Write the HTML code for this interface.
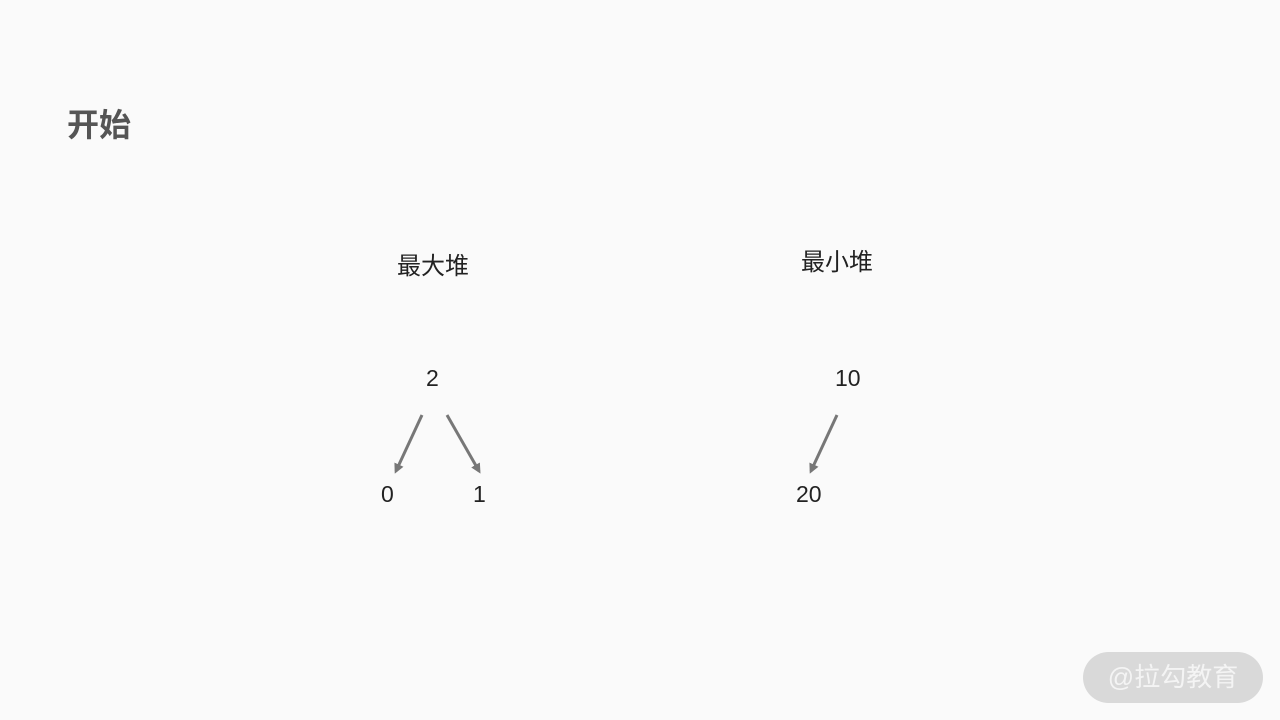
<!DOCTYPE html>
<html><head><meta charset="utf-8"><style>
html,body{margin:0;padding:0}
body{width:1280px;height:720px;background:#fafafa;position:relative;overflow:hidden;font-family:"Liberation Sans","Noto Sans CJK SC",sans-serif;color:#222}
.t{position:absolute;white-space:nowrap;line-height:1}
.badge{position:absolute;left:1083px;top:652px;width:180px;height:51px;border-radius:26px;background:#d9d9d9;color:#f4f4f4;font-size:26px;line-height:51px;text-align:center;font-family:"Liberation Sans","Noto Sans CJK SC",sans-serif}
</style></head><body>
<div class="t" style="left:67px;top:109px;font-size:32px;font-weight:bold;color:#555">开始</div>
<div class="t" style="left:397px;top:255px;font-size:24px">最大堆</div>
<div class="t" style="left:801px;top:251px;font-size:24px">最小堆</div>
<div class="t" style="left:426px;top:367px;font-size:23px">2</div>
<div class="t" style="left:835px;top:367px;font-size:23px">10</div>
<div class="t" style="left:381px;top:483px;font-size:23px">0</div>
<div class="t" style="left:473px;top:483px;font-size:23px">1</div>
<div class="t" style="left:796px;top:483px;font-size:23px">20</div>
<svg width="1280" height="720" style="position:absolute;left:0;top:0">
<defs><marker id="a" markerWidth="10" markerHeight="10" refX="7" refY="5" orient="auto" markerUnits="userSpaceOnUse"><path d="M0,0 L10,5 L0,10 z" fill="#777"/></marker></defs>
<g stroke="#777" stroke-width="3" fill="none">
<line x1="422" y1="415" x2="396" y2="471" marker-end="url(#a)"/>
<line x1="447" y1="415" x2="479" y2="471" marker-end="url(#a)"/>
<line x1="837" y1="415" x2="811" y2="471" marker-end="url(#a)"/>
</g></svg>
<div class="badge">@拉勾教育</div>
</body></html>
